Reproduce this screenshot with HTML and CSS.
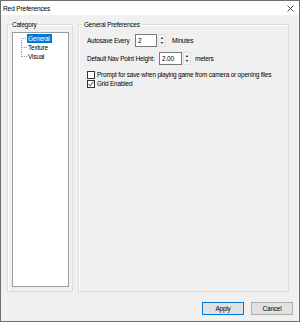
FILE: index.html
```html
<!DOCTYPE html>
<html lang="en">
<head>
    <meta charset="UTF-8">
    <title>Red Preferences</title>
    <link rel="stylesheet" href="styles.css">
</head>
<body>
    <div class="window">
        <div class="titlebar">
            <span class="title">Red Preferences</span>
            <svg class="close" width="7" height="7" viewBox="0 0 7 7">
                <path d="M0.5 0.5L6.5 6.5M6.5 0.5L0.5 6.5" stroke="#333" stroke-width="0.9"/>
            </svg>
        </div>
        <div class="content">
            <div class="panels">
                <fieldset class="group group-cat">
                    <legend>Category</legend>
                    <div class="tree">
                        <ul>
                            <li><span class="item selected">General</span></li>
                            <li><span class="item">Texture</span></li>
                            <li><span class="item">Visual</span></li>
                        </ul>
                    </div>
                </fieldset>
                <fieldset class="group group-prefs">
                    <legend>General Preferences</legend>
                    <div class="row row-autosave">
                        <span class="label label-autosave">Autosave Every</span>
                        <span class="edit edit-short">2</span>
                        <svg class="spin" width="8" height="13" viewBox="0 0 8 13">
                            <rect x="0.5" y="0.5" width="7" height="12" fill="#f4f4f4" stroke="#e0e0e0"/>
                            <path d="M2.5 5h3L4 3z M2.5 8h3L4 10z" fill="#444"/>
                        </svg>
                        <span class="unit">Minutes</span>
                    </div>
                    <div class="row row-height">
                        <span class="label label-height">Default Nav Point Height:</span>
                        <span class="edit edit-long">2.00</span>
                        <svg class="spin" width="8" height="13" viewBox="0 0 8 13">
                            <rect x="0.5" y="0.5" width="7" height="12" fill="#f4f4f4" stroke="#e0e0e0"/>
                            <path d="M2.5 5h3L4 3z M2.5 8h3L4 10z" fill="#444"/>
                        </svg>
                        <span class="unit">meters</span>
                    </div>
                    <label class="check first">
                        <span class="box"></span>
                        <span>Prompt for save when playing game from camera or opening files</span>
                    </label>
                    <label class="check">
                        <span class="box">
                            <svg width="6" height="6" viewBox="0 0 6 6"><path d="M0.5 3L2.2 4.8L5.5 0.8" fill="none" stroke="#222" stroke-width="0.9"/></svg>
                        </span>
                        <span>Grid Enabled</span>
                    </label>
                </fieldset>
            </div>
            <div class="buttons">
                <button class="btn btn-default">Apply</button>
                <button class="btn">Cancel</button>
            </div>
        </div>
    </div>
</body>
</html>
```

FILE: styles.css
```css
* {
    box-sizing: border-box;
}
body {
    margin: 0;
    font-family: "Liberation Sans", Arial, sans-serif;
    font-size: 6.5px;
    letter-spacing: -0.22px;
    white-space: nowrap;
    color: #000;
    background-color: #f0f0f0;
}
.window {
    width: 300px;
    height: 322px;
    border: 1px solid #707070;
    background-color: #f0f0f0;
    display: flex;
    flex-direction: column;
}
.titlebar {
    height: 14px;
    background-color: #fff;
    display: flex;
    align-items: center;
    justify-content: space-between;
    padding: 0 5px 0 2px;
    font-size: 6.6px;
    letter-spacing: -0.15px;
}
.close {
    display: block;
}
.content {
    flex: 1;
    display: flex;
    flex-direction: column;
    padding: 5px 6px 6px 6px;
}
.panels {
    flex: 1;
    display: flex;
    gap: 5px;
    margin-right: 4px;
}
.group {
    margin: 0;
    min-width: 0;
    border: 1px solid #dcdcdc;
    box-shadow: inset 1px 1px 0 #fff;
    display: flex;
    flex-direction: column;
}
.group legend {
    line-height: 9px;
    padding: 0 1px;
    margin-left: -1px;
}
.group-cat {
    width: 66px;
    padding: 0 3px 4px 4px;
}
.group-prefs {
    flex: 1;
    padding: 0 4px 4px 8px;
}
.group-prefs legend {
    margin-left: -4px;
}
.tree {
    flex: 1;
    margin-top: 3px;
    background-color: #fff;
    border: 1px solid #9c9c9c;
}
.tree ul {
    list-style: none;
    margin: 0;
    padding: 1px 0 0 8px;
}
.tree li {
    position: relative;
    height: 9px;
    line-height: 9px;
    padding-left: 6px;
}
.tree li::before {
    content: "";
    position: absolute;
    left: 0;
    top: 0;
    width: 5px;
    height: 4px;
    border-left: 1px dotted #a0a0a0;
    border-bottom: 1px dotted #a0a0a0;
}
.tree li:first-child::before {
    border-left: none;
}
.tree li:not(:last-child)::after {
    content: "";
    position: absolute;
    left: 0;
    top: 4px;
    height: 5px;
    border-left: 1px dotted #a0a0a0;
}
.item {
    display: inline-block;
    padding: 0 1px;
    height: 9px;
}
.item.selected {
    background-color: #0078d7;
    color: #fff;
    padding-right: 2px;
}
.row {
    display: flex;
    align-items: center;
    height: 13px;
    margin-top: 5px;
}
.label-autosave {
    width: 48px;
}
.label-height {
    width: 72px;
}
.edit {
    height: 13px;
    line-height: 11px;
    padding-left: 2px;
    background-color: #fff;
    border: 1px solid #7a7a7a;
}
.edit-short {
    width: 22px;
}
.edit-long {
    width: 23px;
}
.spin {
    display: block;
    margin-left: 1px;
}
.row-autosave .unit {
    margin-left: 6px;
}
.row-height .unit {
    margin-left: 4px;
}
.check {
    display: flex;
    align-items: center;
    height: 9px;
}
.check.first {
    margin-top: 5px;
}
.box {
    width: 8px;
    height: 8px;
    margin-right: 2px;
    background-color: #fff;
    border: 1px solid #333;
    display: flex;
    align-items: center;
    justify-content: center;
}
.box svg {
    display: block;
}
.buttons {
    display: flex;
    justify-content: flex-end;
    gap: 7px;
    margin-top: 10px;
}
.btn {
    width: 42px;
    height: 13px;
    padding: 0;
    font-family: inherit;
    font-size: 6.5px;
    letter-spacing: -0.22px;
    color: #000;
    background-color: #e1e1e1;
    border: 1px solid #adadad;
}
.btn-default {
    border-color: #0078d7;
}
```
